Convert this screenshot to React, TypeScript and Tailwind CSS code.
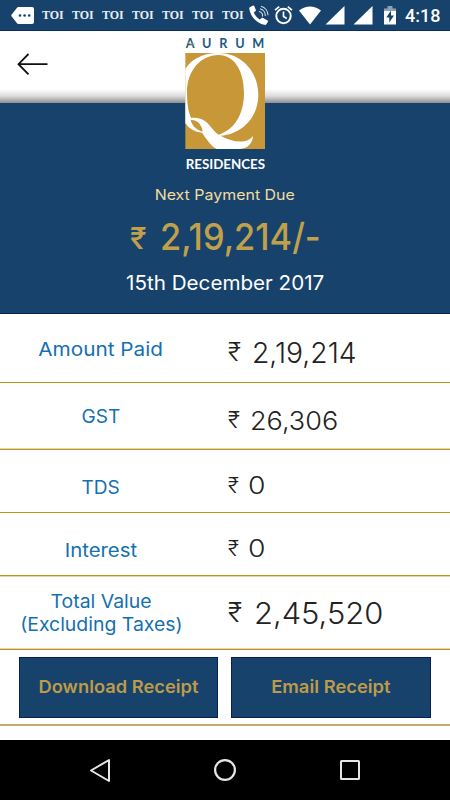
import React from "react";

type PaymentRow = {
  label: string[];
  amount: string;
  rowClass: string;
  labelClass: string;
  textClass: string;
  valueClass: string;
  rupeeClass: string;
  amountClass: string;
};

const rows: PaymentRow[] = [
  {
    label: ["Amount Paid"],
    amount: "2,19,214",
    rowClass: "h-[69px]",
    labelClass: "pt-0.5",
    textClass: "scale-x-[1.12]",
    valueClass: "pt-[9px]",
    rupeeClass: "text-[25px] w-6",
    amountClass: "text-[28px] scale-x-[1.01]",
  },
  {
    label: ["GST"],
    amount: "26,306",
    rowClass: "h-[67px] shadow-[inset_0_-1px_0_#e3d5b4]",
    labelClass: "pt-0",
    textClass: "scale-x-[1.03]",
    valueClass: "pt-2",
    rupeeClass: "text-[23px] w-[22px]",
    amountClass: "text-[26px] scale-x-[1.04]",
  },
  {
    label: ["TDS"],
    amount: "0",
    rowClass: "h-[63px]",
    labelClass: "pt-3",
    textClass: "scale-x-[1.03]",
    valueClass: "pt-2.5",
    rupeeClass: "text-[21px] w-5",
    amountClass: "text-[24px] scale-x-[1.18]",
  },
  {
    label: ["Interest"],
    amount: "0",
    rowClass: "h-[63px] shadow-[0_1px_0_#e3d5b4]",
    labelClass: "pt-3",
    textClass: "scale-x-[1.1]",
    valueClass: "pt-2.5",
    rupeeClass: "text-[21px] w-5",
    amountClass: "text-[24px] scale-x-[1.18]",
  },
  {
    label: ["Total Value", "(Excluding Taxes)"],
    amount: "2,45,520",
    rowClass: "h-[74px] shadow-[inset_0_-1px_0_#e3d5b4]",
    labelClass: "pt-0",
    textClass: "scale-x-[1.05]",
    valueClass: "pt-0.5",
    rupeeClass: "text-[27px] w-[26px]",
    amountClass: "text-[30px] scale-x-[1.03]",
  },
];

const StatusBar = () => {
  return (
    <div className="flex h-[31px] items-center border-b border-[#0a2f63] bg-[#16426b] pl-[11px] text-white">
      <svg width="23" height="17" viewBox="0 0 23 17">
        <path d="M7.500 0H21a2 2 0 0 1 2 2v13a2 2 0 0 1-2 2H7.500a2 2 0 0 1-1.700-1L.5 9.200a1.400 1.400 0 0 1 0-1.400L5.800 1a2 2 0 0 1 1.700-1Z" fill="#fff" />
        <g fill="#16426b">
          <circle cx="9" cy="8.500" r="1.300" />
          <circle cx="13.600" cy="8.500" r="1.300" />
          <circle cx="18.200" cy="8.500" r="1.300" />
        </g>
      </svg>
      <div className="ml-2 flex font-['Liberation_Serif',serif] text-xs font-bold">
        {[0, 1, 2, 3, 4, 5, 6].map((i) => (
          <span key={i} className="w-[30px] text-[#e8edf2]">
            TOI
          </span>
        ))}
      </div>
      <svg className="-ml-[3px]" width="20" height="20" viewBox="0 0 20 20">
        <path d="M.8 2.300 4 .6c.5-.2 1 0 1.200.5l1.700 3.800c.2.500 0 .9-.3 1.200L4.800 7.600c1.400 3 3.300 5.200 6 7l2-1.600c.4-.3.900-.4 1.300-.1l4.500 2.600c.5.300.6.800.3 1.300l-1.500 2.500c-.5.700-1.300.7-2.200.5C7.500 18.300 1.500 11.500.3 4c-.1-.7 0-1.300.5-1.700Z" fill="#fff" />
        <path d="M10 6.500a4.500 4.500 0 0 1 3.500 5M11 3.800a7 7 0 0 1 5.300 7.200M12 1.200a9.500 9.500 0 0 1 7 9" fill="none" stroke="#d5dee6" strokeWidth="1.100" />
      </svg>
      <svg className="ml-[5px]" width="19" height="20" viewBox="0 0 19 20" fill="none" stroke="#fff" strokeWidth="2">
        <circle cx="9.500" cy="11" r="7.200" />
        <path d="M9.500 6.500v5l3.300 2M1 5.200 5.200 1.600M18 5.200l-4.200-3.600" strokeWidth="1.700" />
      </svg>
      <svg className="ml-1.5" width="22" height="19" viewBox="0 0 22 19">
        <path d="M0 4.500Q11-3.500 22 4.500L11 18.500Z" fill="#fff" />
      </svg>
      <svg className="ml-1" width="20" height="19" viewBox="0 0 20 19">
        <path d="M19.500 0v18.500H.5Z" fill="#fff" />
      </svg>
      <svg className="ml-2" width="20" height="19" viewBox="0 0 20 19">
        <path d="M19.500 0v18.500H.5Z" fill="#fff" />
      </svg>
      <svg className="ml-[11px]" width="12" height="19" viewBox="0 0 12 19">
        <path d="M0 2.500h3.500V0h5v2.500H12V8H0Z" fill="#8ba1b5" />
        <path d="M0 5h12v13.500H0Z" fill="#fff" />
        <path d="M7 4.500 2.300 11.500h3v5l4.700-7H7Z" fill="#16426b" />
      </svg>
      <span className="ml-[9px] pt-0.5 font-[Roboto,sans-serif] text-[18px] font-medium leading-none">
        4:18
      </span>
    </div>
  );
};

const Logo = () => {
  return (
    <svg className="absolute left-[170px] top-[30px]" width="110" height="150" viewBox="0 0 330 450">
      <text x="47" y="54" fontSize="38" fontWeight="700" fontFamily="Lato, sans-serif" textLength="236" fill="#1b5a7d">
        AURUM
      </text>
      <path d="M52 36q10 10 23 6" stroke="#d3a54d" strokeWidth="2.500" fill="none" />
      <rect x="46" y="69" width="239" height="288" fill="#c89738" />
      <path d="M46 117C62 90 95 69 145 69C215 69 265 125 265 195C265 262 215 313 152 317C175 330 200 337 222 334C236 331 243 325 249 318C248 338 235 357 205 357H140C120 345 108 325 96 308C80 307 60 300 46 280Z" fill="#fff" />
      <path d="M146 75C90 75 51 125 51 185C51 220 55 248 64 264C90 260 108 272 122 290C132 302 140 312 147 314C195 298 222 250 222 190C222 124 194 75 146 75Z" fill="#c89738" />
      <path d="M62 270C82 268 96 285 98 305C80 300 66 288 62 270Z" fill="#c89738" />
      <text x="47" y="417" fontSize="42" fontWeight="700" fontFamily="Lato, sans-serif" textLength="238" lengthAdjust="spacingAndGlyphs" fill="#fff">
        RESIDENCES
      </text>
    </svg>
  );
};

const App = () => {
  return (
    <div className="relative flex h-[800px] w-[450px] flex-col overflow-hidden bg-white font-[Inter,sans-serif]">
      <StatusBar />

      <header className="flex h-[72px] flex-col justify-between bg-white">
        <button aria-label="Back" className="ml-4 mt-[22px] w-8">
          <svg width="32" height="23" viewBox="0 0 32 23" fill="none" stroke="#111" strokeWidth="1.800">
            <path d="M31.500 11.200H2.500M12.500 1 2.500 11.200l10 10.200" />
          </svg>
        </button>
        <div className="h-[14px] bg-gradient-to-b from-white via-[#dcdcdc] to-[#8f8f8f]" />
      </header>
      <Logo />

      {/* NEXT PAYMENT */}
      <section className="flex h-[211px] flex-col items-center border-b border-[#06205a] bg-[#16426b] pt-20">
        <p className="scale-x-[1.1] text-[14.5px] leading-6 text-[#f0dda0]">
          Next Payment Due
        </p>
        <p className="mt-[7px] flex h-[46px] w-[190px] items-center whitespace-nowrap text-[#c1a04c]">
          <span className="w-[30px] shrink-0 pt-0.5 text-[30px] font-medium">₹</span>
          <span className="origin-left scale-x-[0.93] text-[37px] font-medium">
            2,19,214/-
          </span>
        </p>
        <p className="mt-[9px] scale-x-[1.03] text-[20px] leading-7 text-white">
          15th December 2017
        </p>
      </section>

      {/* BREAKDOWN */}
      <section>
        {rows.map((row, i) => (
          <div key={i} className={`flex border-b border-b-[#bd9416] ${row.rowClass}`}>
            <div
              className={`flex w-[202px] flex-col items-center justify-center text-[18.5px] leading-[22.5px] text-[#1470b0] ${row.labelClass}`}
            >
              {row.label.map((line) => (
                <span key={line} className={`whitespace-nowrap ${row.textClass}`}>
                  {line}
                </span>
              ))}
            </div>
            <div className={`flex items-center pl-[26px] font-[350] text-[#222] ${row.valueClass}`}>
              <span className={row.rupeeClass}>₹</span>
              <span className={`origin-left ${row.amountClass}`}>{row.amount}</span>
            </div>
          </div>
        ))}
      </section>

      {/* ACTIONS */}
      <section className="flex h-[76px] gap-[13px] border-b-2 border-[#c5aa6b] pl-[19px] pt-[7px]">
        <button className="h-[61px] w-[199px] border border-[#06205a] bg-[#16426b] text-[17.5px] font-semibold text-[#bf9b48]">
          <span className="inline-block scale-x-[1.045]">Download Receipt</span>
        </button>
        <button className="h-[61px] w-[200px] border border-[#06205a] bg-[#16426b] text-[17.5px] font-semibold text-[#bf9b48]">
          <span className="inline-block scale-x-[1.05]">Email Receipt</span>
        </button>
      </section>

      <nav className="mt-auto flex h-[60px] items-center justify-between bg-black px-[89px]">
        <svg width="22" height="25" viewBox="0 0 22 25" fill="none" stroke="#e6e6e6" strokeWidth="2" strokeLinejoin="round">
          <path d="M20 2v21L2 12.500Z" />
        </svg>
        <svg width="24" height="24" viewBox="0 0 24 24" fill="none" stroke="#e6e6e6" strokeWidth="2.200">
          <circle cx="12" cy="12" r="9.900" />
        </svg>
        <svg width="22" height="22" viewBox="0 0 22 22" fill="none" stroke="#e6e6e6" strokeWidth="2">
          <rect x="2" y="2" width="18" height="18" rx=".5" />
        </svg>
      </nav>
    </div>
  );
};

export default App;
